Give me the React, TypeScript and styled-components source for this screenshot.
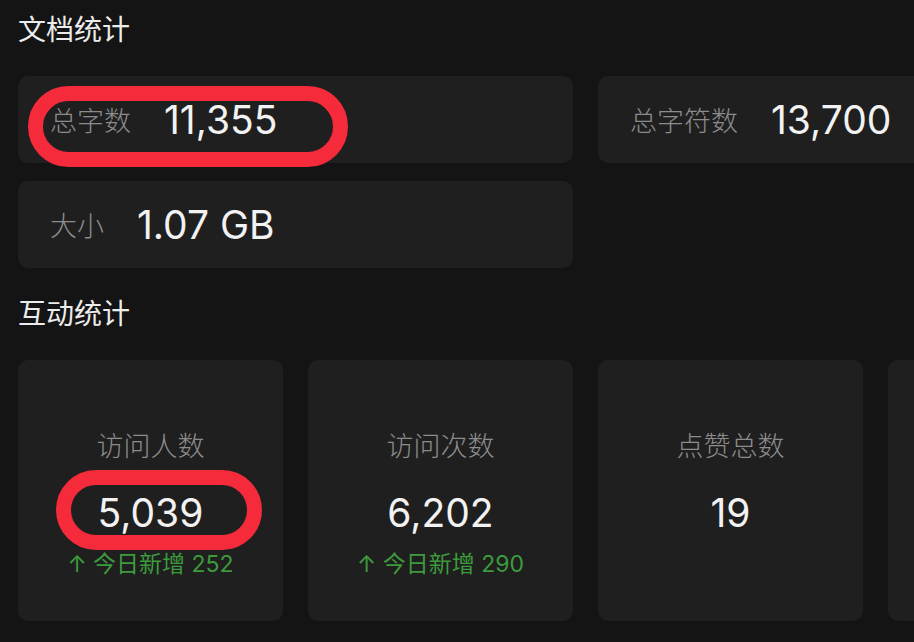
import React from "react";
import styled, { createGlobalStyle } from "styled-components";

const GlobalStyle = createGlobalStyle`
  html, body {
    margin: 0;
    padding: 0;
    background: #141414;
    overflow: hidden;
  }
  body {
    font-family: "Inter", "Noto Sans CJK SC", sans-serif;
  }
`;

const Page = styled.div`
  width: 914px;
  height: 642px;
  padding: 12px 0 0 18px;
  box-sizing: border-box;
  overflow: hidden;
  background: #141414;
`;

const SectionTitle = styled.div`
  font-size: 28px;
  line-height: 36px;
  font-weight: 400;
  color: #ececec;
  margin-bottom: 28px;
`;

const InfoGrid = styled.div`
  display: grid;
  grid-template-columns: 555px 555px;
  column-gap: 25px;
  row-gap: 18px;
  margin-bottom: 28px;
`;

const InfoCard = styled.div`
  position: relative;
  height: 87px;
  border-radius: 10px;
  background: #1f1f1f;
  display: flex;
  align-items: center;
  padding-left: 32px;
  gap: 33px;
`;

const Label = styled.span`
  font-size: 27px;
  font-weight: 300;
  color: #8c8c8c;
  white-space: nowrap;
`;

const Value = styled.span`
  font-size: 39px;
  font-weight: 400;
  color: #f2f2f2;
  white-space: nowrap;
`;

const StatGrid = styled.div`
  display: grid;
  grid-template-columns: repeat(4, 265px);
  column-gap: 25px;
`;

const StatCard = styled.div`
  position: relative;
  height: 261px;
  border-radius: 10px;
  background: #1f1f1f;
  display: flex;
  flex-direction: column;
  align-items: center;
  padding-top: 69px;
  box-sizing: border-box;
`;

const StatLabel = styled.div`
  font-size: 27px;
  line-height: 36px;
  font-weight: 300;
  color: #8c8c8c;
`;

const StatValue = styled.div`
  margin-top: 25px;
  font-size: 39px;
  line-height: 46px;
  font-weight: 400;
  color: #f2f2f2;
`;

const Growth = styled.div`
  margin-top: 13px;
  font-size: 23px;
  line-height: 30px;
  color: #3d9a3d;
  white-space: nowrap;
`;

interface MarkProps {
  $left: number;
  $top: number;
  $w: number;
  $h: number;
}

const Mark = styled.div<MarkProps>`
  position: absolute;
  left: ${({ $left }) => $left}px;
  top: ${({ $top }) => $top}px;
  width: ${({ $w }) => $w}px;
  height: ${({ $h }) => $h}px;
  border: 15px solid #f52a3a;
  border-radius: 999px;
  box-sizing: border-box;
  pointer-events: none;
`;

const stats = [
  { label: "访问人数", value: "5,039", today: 252 },
  { label: "访问次数", value: "6,202", today: 290 },
  { label: "点赞总数", value: "19" },
  { label: "", value: "" },
];

const App = () => {
  return (
    <Page>
      <GlobalStyle />
      <SectionTitle>文档统计</SectionTitle>
      <InfoGrid>
        <InfoCard>
          <Label>总字数</Label>
          <Value>11,355</Value>
          <Mark $left={10} $top={10} $w={320} $h={81} />
        </InfoCard>
        <InfoCard>
          <Label>总字符数</Label>
          <Value>13,700</Value>
        </InfoCard>
        <InfoCard>
          <Label>大小</Label>
          <Value>1.07 GB</Value>
        </InfoCard>
      </InfoGrid>
      <SectionTitle>互动统计</SectionTitle>
      <StatGrid>
        {stats.map((s, i) => (
          <StatCard key={i}>
            <StatLabel>{s.label}</StatLabel>
            <StatValue>{s.value}</StatValue>
            {s.today !== undefined && <Growth>↑ 今日新增 {s.today}</Growth>}
            {i === 0 && <Mark $left={38} $top={110} $w={206} $h={80} />}
          </StatCard>
        ))}
      </StatGrid>
    </Page>
  );
};

export default App;
